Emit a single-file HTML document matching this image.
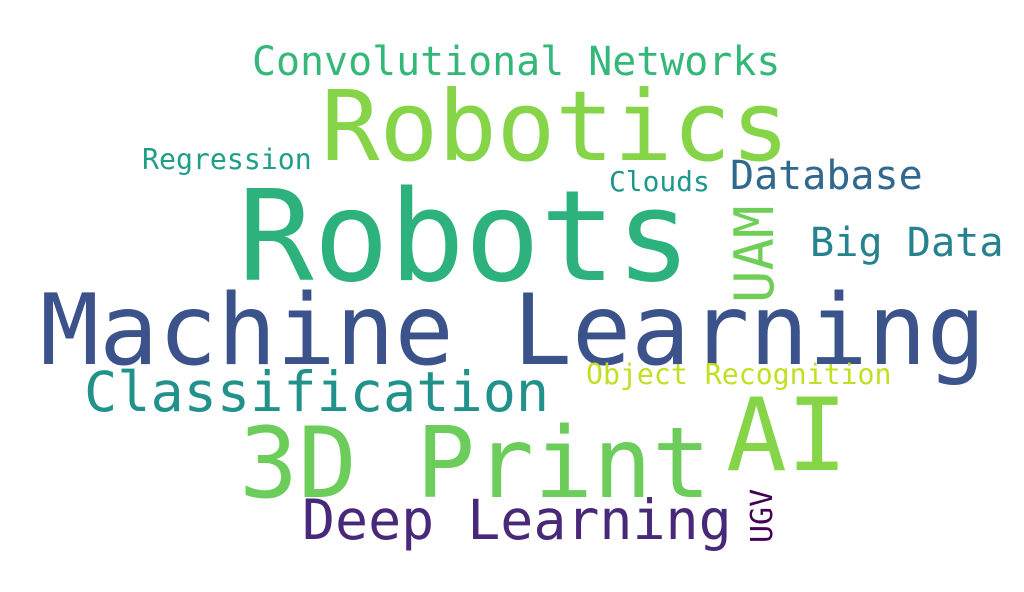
<!DOCTYPE html>
<html><head><meta charset="utf-8"><style>
html,body{margin:0;padding:0;background:#fff;}
svg{display:block;}
text{font-family:"DejaVu Sans Mono","Liberation Mono",monospace;}
</style></head><body>
<svg width="1024" height="592" viewBox="0 0 1024 592" xmlns="http://www.w3.org/2000/svg">
<rect width="1024" height="592" fill="#fff"/>
<text x="252" y="75" font-size="39.9" fill="#35b779">Convolutional Networks</text>
<text x="321" y="160" font-size="97.3" fill="#86d549">Robotics</text>
<text x="142" y="169" font-size="28.2" fill="#1f9e89">Regression</text>
<text x="609" y="191" font-size="27.9" fill="#1f988b">Clouds</text>
<text x="730" y="189" font-size="40" fill="#31688e">Database</text>
<text x="238" y="280" font-size="125.5" fill="#2db27d">Robots</text>
<text x="810" y="256" font-size="40.2" fill="#26828e">Big Data</text>
<text transform="translate(773,303) rotate(-90)" font-size="54" fill="#6ece58">UAM</text>
<text x="40" y="364" font-size="98.2" fill="#3b528b">Machine Learning</text>
<text x="586" y="384" font-size="28.2" fill="#c2df23">Object Recognition</text>
<text x="84" y="411" font-size="55.2" fill="#21918c">Classification</text>
<text x="726" y="470" font-size="101" fill="#86d549">AI</text>
<text x="239" y="497" font-size="98" fill="#6ccd5a">3D Print</text>
<text x="302" y="539" font-size="54.9" fill="#482878">Deep Learning</text>
<text transform="translate(772,543) rotate(-90)" font-size="30" fill="#440154">UGV</text>
</svg>
</body></html>
